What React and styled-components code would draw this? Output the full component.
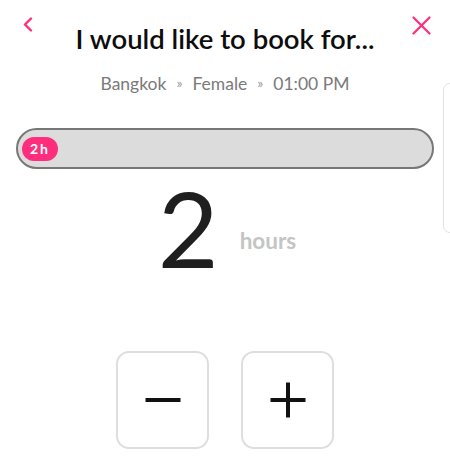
import { useState } from 'react';
import { createGlobalStyle, styled } from 'styled-components';

const GlobalStyle = createGlobalStyle`
  * { box-sizing: border-box; }
  html, body { margin: 0; padding: 0; background: #fff; }
  body { font-family: 'Lato', 'Noto Sans', sans-serif; color: #111; }
`;

const Stage = styled.div`
  display: flex;
  width: 450px;
  height: 464px;
  overflow: hidden;
`;

const Slide = styled.main`
  flex: 0 0 450px;
  margin-right: -7px;
  display: flex;
  flex-direction: column;
  align-items: center;
`;

const PeekCard = styled.aside`
  flex: 0 0 240px;
  margin-top: 83px;
  height: 150px;
  border: 1px solid #e2e2e2;
  border-radius: 7px;
  background: #fff;
`;

const Header = styled.header`
  display: grid;
  grid-template-columns: 60px 1fr 60px;
  width: 100%;
`;

const IconButton = styled.button`
  display: flex;
  justify-content: ${(p) => (p.$end ? 'flex-end' : 'flex-start')};
  align-items: flex-start;
  padding: ${(p) => (p.$end ? '16px 19px 0 0' : '17px 0 0 23px')};
  border: 0;
  background: none;
  color: #ff2d7d;
  cursor: pointer;
`;

const Title = styled.h1`
  margin: 22px 0 0;
  font-size: 27.5px;
  line-height: 1.2;
  font-weight: 600;
  text-align: center;
  white-space: nowrap;
  color: #0d0d0d;
`;

const Crumbs = styled.p`
  display: flex;
  gap: 10px;
  margin: 18px 0 0;
  font-size: 17.5px;
  line-height: 1.2;
  color: #7a7a7a;
`;

const Sep = styled.span`
  font-size: 14px;
  color: #9a9a9a;
  align-self: center;
`;

const Track = styled.div`
  display: flex;
  align-items: center;
  width: 418px;
  height: 41px;
  margin-top: 34px;
  padding: 0 4px;
  border: 2px solid #777;
  border-radius: 21px;
  background: #dcdcdc;
`;

const Pill = styled.div`
  width: ${(p) => p.$w}px;
  min-width: 36px;
  height: 24px;
  border-radius: 12px;
  background: #ff2d7d;
  color: #fff;
  font-size: 14px;
  font-weight: 700;
  letter-spacing: 2px;
  line-height: 24px;
  text-align: center;
`;

const Amount = styled.div`
  margin-top: 6px;
  padding-left: 4px;
  white-space: nowrap;
`;

const Big = styled.span`
  font-size: 105px;
  line-height: 1;
  font-weight: 400;
  color: #1f1f1f;
`;

const Unit = styled.span`
  display: inline-block;
  margin-left: 21px;
  vertical-align: 19px;
  font-size: 22.5px;
  font-weight: 700;
  color: #c4c4c4;
`;

const Steppers = styled.div`
  display: flex;
  gap: 32px;
  margin-top: 71px;
`;

const StepButton = styled.button`
  display: flex;
  align-items: center;
  justify-content: center;
  width: 93px;
  height: 98px;
  padding: 0;
  border: 2px solid #dedede;
  border-radius: 13px;
  background: #fff;
  color: #111;
  cursor: pointer;
`;

function Chevron() {
  return (
    <svg width="10" height="15" viewBox="0 0 10 15" fill="none">
      <polyline points="8,1.5 2,7.5 8,13.5" stroke="currentColor" strokeWidth="2.4" strokeLinecap="round" strokeLinejoin="round" />
    </svg>
  );
}

function Cross() {
  return (
    <svg width="19" height="19" viewBox="0 0 19 19" fill="none">
      <path d="M1.5 1.5 L17.5 17.5 M17.5 1.5 L1.5 17.5" stroke="currentColor" strokeWidth="2.2" strokeLinecap="round" />
    </svg>
  );
}

function StepIcon({ plus }) {
  return (
    <svg width="36" height="36" viewBox="0 0 36 36">
      <rect x="0.5" y="16" width="35" height="4" fill="currentColor" />
      {plus && <rect x="16" y="0.5" width="4" height="35" fill="currentColor" />}
    </svg>
  );
}

export default function App() {
  const [hours, setHours] = useState(2);

  return (
    <>
      <GlobalStyle />
      <Stage>
        <Slide>
          <Header>
            <IconButton aria-label="Back">
              <Chevron />
            </IconButton>
            <Title>I would like to book for...</Title>
            <IconButton $end aria-label="Close">
              <Cross />
            </IconButton>
          </Header>
          <Crumbs>
            <span>Bangkok</span>
            <Sep>»</Sep>
            <span>Female</span>
            <Sep>»</Sep>
            <span>01:00 PM</span>
          </Crumbs>
          <Track>
            <Pill $w={36 + (hours - 2) * 30}>{hours}h</Pill>
          </Track>
          <Amount>
            <Big>{hours}</Big>
            <Unit>hours</Unit>
          </Amount>
          <Steppers>
            <StepButton aria-label="Less" onClick={() => setHours((h) => Math.max(1, h - 1))}>
              <StepIcon />
            </StepButton>
            <StepButton aria-label="More" onClick={() => setHours((h) => Math.min(12, h + 1))}>
              <StepIcon plus />
            </StepButton>
          </Steppers>
        </Slide>
        <PeekCard />
      </Stage>
    </>
  );
}
